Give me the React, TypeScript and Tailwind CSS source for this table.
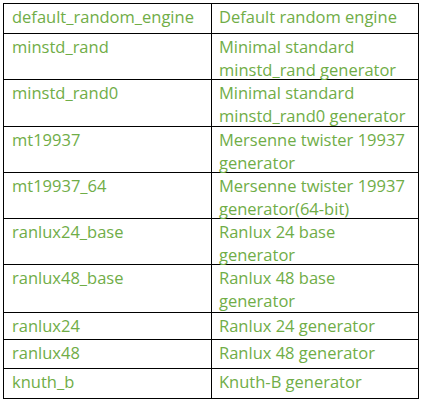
import React from "react";

const rows: { a: string; b: string[]; h: string }[] = [
  { a: "default_random_engine", b: ["Default random engine"], h: "h-[30px]" },
  { a: "minstd_rand", b: ["Minimal standard", "minstd_rand generator"], h: "h-[46px]" },
  { a: "minstd_rand0", b: ["Minimal standard", "minstd_rand0 generator"], h: "h-[47px]" },
  { a: "mt19937", b: ["Mersenne twister 19937", "generator"], h: "h-[46px]" },
  { a: "mt19937_64", b: ["Mersenne twister 19937", "generator(64-bit)"], h: "h-[46px]" },
  { a: "ranlux24_base", b: ["Ranlux 24 base", "generator"], h: "h-[46px]" },
  { a: "ranlux48_base", b: ["Ranlux 48 base", "generator"], h: "h-[48px]" },
  { a: "ranlux24", b: ["Ranlux 24 generator"], h: "h-[27px]" },
  { a: "ranlux48", b: ["Ranlux 48 generator"], h: "h-[29px]" },
  { a: "knuth_b", b: ["Knuth-B generator"], h: "h-[29px]" },
];

export default function App() {
  return (
    <div className="w-[422px] h-[401px] bg-white pt-[3px] pl-[3px]" style={{ fontFamily: "'Open Sans', sans-serif" }}>
      <div className="w-[416px] border-[1.5px] border-black text-[16.5px] leading-[23px] text-[#70ad47]">
        {rows.map((r, i) => (
          <div
            key={r.a}
            className={`flex ${r.h} ${i < rows.length - 1 ? "border-b-[1.5px] border-black" : ""}`}
          >
            <div className="w-[208px] shrink-0 border-r-[1.5px] border-black pl-[8px] pt-[1px] whitespace-nowrap">
              {r.a}
            </div>
            <div className="flex-1 pl-[7px] pt-[1px] whitespace-nowrap">
              {r.b.map((l) => (
                <div key={l}>{l}</div>
              ))}
            </div>
          </div>
        ))}
      </div>
    </div>
  );
}
